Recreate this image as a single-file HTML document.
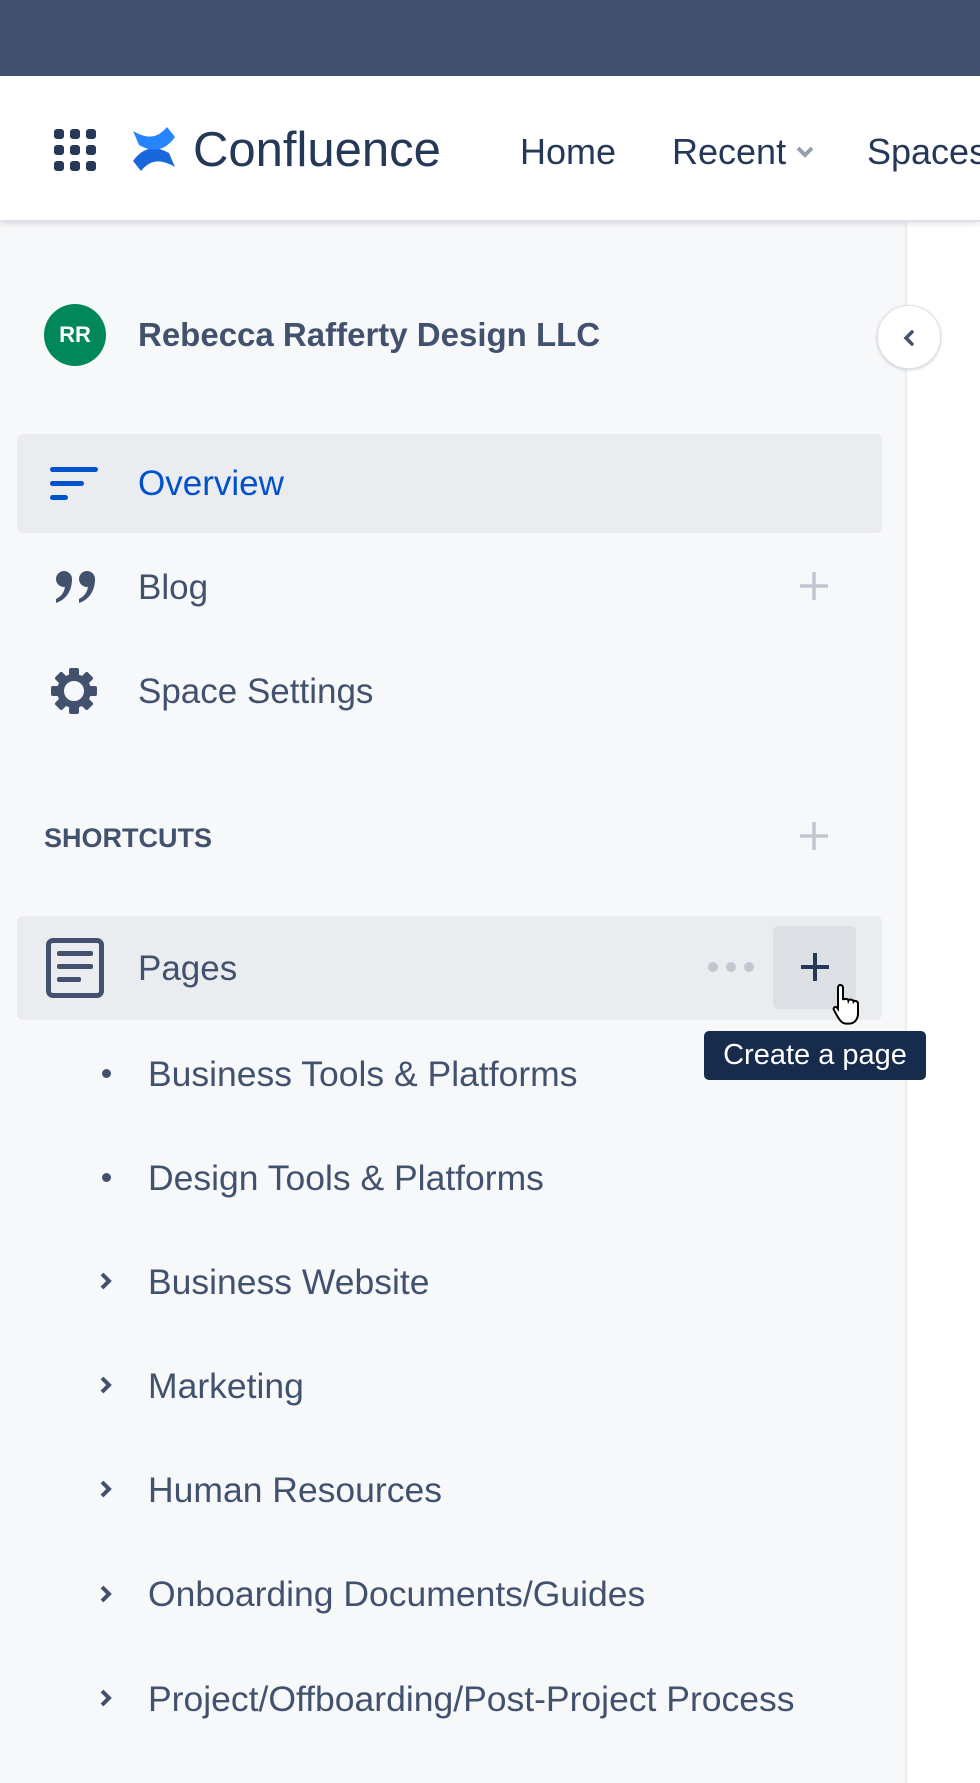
<!DOCTYPE html>
<html><head><meta charset="utf-8"><style>
*{margin:0;padding:0;box-sizing:border-box}
body{width:980px;height:1783px;overflow:hidden;background:#fff;font-family:"Liberation Sans",sans-serif;color:#42526e;position:relative}
.abs{position:absolute}
.top{left:0;top:0;width:980px;height:76px;background:#42526e}
.hdr{left:0;top:76px;width:980px;height:146px;background:#fff;border-bottom:2px solid #dfe1e6;box-shadow:0 2px 6px rgba(9,30,66,.12);z-index:2}
.side{left:0;top:222px;width:907px;height:1561px;background:#f7f8f9;border-right:2px solid #ebecf0}
.t{position:absolute;white-space:nowrap;line-height:1}
.row{position:absolute;left:17px;width:865px;background:#ebecf0;border-radius:6px}
.bul{position:absolute;left:102px;width:9px;height:9px;border-radius:50%;background:#42526e}
.it{font-size:35.5px}
</style></head><body>
<div class="abs top"></div>
<div class="abs hdr">
 <svg class="abs" style="left:54px;top:53px" width="42" height="42" viewBox="0 0 42 42" fill="#253858">
  <rect x="0" y="0" width="10" height="10" rx="3"/><rect x="16" y="0" width="10" height="10" rx="3"/><rect x="32" y="0" width="10" height="10" rx="3"/>
  <rect x="0" y="16" width="10" height="10" rx="3"/><rect x="16" y="16" width="10" height="10" rx="3"/><rect x="32" y="16" width="10" height="10" rx="3"/>
  <rect x="0" y="32" width="10" height="10" rx="3"/><rect x="16" y="32" width="10" height="10" rx="3"/><rect x="32" y="32" width="10" height="10" rx="3"/>
 </svg>
 <svg class="abs" style="left:131px;top:51px" width="46" height="44" viewBox="0 0 46 44">
  <path d="M2 34 C12 20 24 18 38 26 L44 40 C30 32 20 32 10 44 Z" fill="#1868db"/>
  <path d="M44 10 C34 24 22 26 8 18 L2 4 C16 12 26 12 36 0 Z" fill="#2684ff"/>
 </svg>
 <div class="t" style="left:193px;top:50px;font-size:49px;color:#253858">Confluence</div>
 <div class="t" style="left:520px;top:58px;font-size:36px;color:#253858">Home</div>
 <div class="t" style="left:672px;top:58px;font-size:36px;color:#253858">Recent</div>
 <svg class="abs" style="left:795px;top:69px" width="20" height="14" viewBox="0 0 20 14"><path d="M3 3l7 7 7-7" stroke="#97a0af" stroke-width="4" fill="none"/></svg>
 <div class="t" style="left:867px;top:58px;font-size:36px;color:#253858">Spaces</div>
</div>
<div class="abs side"></div>
<div class="abs" style="left:44px;top:304px;width:62px;height:62px;border-radius:50%;background:#00875a;color:#fff;font-size:22px;font-weight:bold;text-align:center;line-height:62px">RR</div>
<div class="t" style="left:138px;top:318px;font-size:33px;font-weight:bold;color:#42526e">Rebecca Rafferty Design LLC</div>
<div class="abs" style="left:877px;top:305px;width:64px;height:64px;border-radius:50%;background:#fff;border:1px solid #dfe1e6;box-shadow:0 1px 3px rgba(9,30,66,.2);z-index:3">
 <svg class="abs" style="left:22px;top:22px" width="20" height="20" viewBox="0 0 20 20"><path d="M12 4l-6 6 6 6" stroke="#42526e" stroke-width="3.5" fill="none" stroke-linecap="round"/></svg>
</div>
<div class="row" style="top:434px;height:99px"></div>
<svg class="abs" style="left:50px;top:467px" width="50" height="36" viewBox="0 0 50 36" fill="#0052cc"><rect x="0" y="0" width="48" height="5" rx="2.5"/><rect x="0" y="14" width="34" height="5" rx="2.5"/><rect x="0" y="28" width="18" height="5" rx="2.5"/></svg>
<div class="t" style="left:138px;top:466px;font-size:35px;color:#0052cc">Overview</div>
<svg class="abs" style="left:55px;top:570px" width="42" height="34" viewBox="0 0 42 34" fill="#42526e">
 <circle cx="9" cy="9" r="8"/><path d="M17 9 C17 22 10 30 1 33 L1 29 C7 26 10 21 10 15 Z"/>
 <circle cx="32" cy="9" r="8"/><path d="M40 9 C40 22 33 30 24 33 L24 29 C30 26 33 21 33 15 Z"/>
</svg>
<div class="t" style="left:138px;top:570px;font-size:35px">Blog</div>
<svg class="abs" style="left:799px;top:571px" width="30" height="30" viewBox="0 0 30 30"><path d="M15 1v28M1 15h28" stroke="#c1c7d0" stroke-width="3.5"/></svg>
<svg class="abs" style="left:51px;top:668px" width="46" height="46" viewBox="0 0 46 46" fill="#42526e">
 <g transform="translate(23 23)">
  <rect x="-5" y="-23" width="10" height="10" rx="2"/><rect x="-5" y="-23" width="10" height="10" rx="2" transform="rotate(45)"/>
  <rect x="-5" y="-23" width="10" height="10" rx="2" transform="rotate(90)"/><rect x="-5" y="-23" width="10" height="10" rx="2" transform="rotate(135)"/>
  <rect x="-5" y="-23" width="10" height="10" rx="2" transform="rotate(180)"/><rect x="-5" y="-23" width="10" height="10" rx="2" transform="rotate(225)"/>
  <rect x="-5" y="-23" width="10" height="10" rx="2" transform="rotate(270)"/><rect x="-5" y="-23" width="10" height="10" rx="2" transform="rotate(315)"/>
  <circle r="13.5" fill="none" stroke="#42526e" stroke-width="7"/>
 </g>
</svg>
<div class="t" style="left:138px;top:674px;font-size:35px">Space Settings</div>
<div class="t" style="left:44px;top:825px;font-size:27px;font-weight:bold">SHORTCUTS</div>
<svg class="abs" style="left:799px;top:821px" width="30" height="30" viewBox="0 0 30 30"><path d="M15 1v28M1 15h28" stroke="#c1c7d0" stroke-width="3.5"/></svg>
<div class="row" style="top:916px;height:104px"></div>
<div class="abs" style="left:46px;top:938px;width:58px;height:60px;border:5px solid #42526e;border-radius:7px"></div>
<div class="abs" style="left:57px;top:951px;width:36px;height:5px;background:#42526e;border-radius:2px"></div>
<div class="abs" style="left:57px;top:964px;width:36px;height:5px;background:#42526e;border-radius:2px"></div>
<div class="abs" style="left:57px;top:977px;width:24px;height:5px;background:#42526e;border-radius:2px"></div>
<div class="t" style="left:138px;top:951px;font-size:35px">Pages</div>
<div class="abs" style="left:708px;top:962px;width:10px;height:10px;border-radius:50%;background:#c1c7d0"></div>
<div class="abs" style="left:726px;top:962px;width:10px;height:10px;border-radius:50%;background:#c1c7d0"></div>
<div class="abs" style="left:744px;top:962px;width:10px;height:10px;border-radius:50%;background:#c1c7d0"></div>
<div class="abs" style="left:773px;top:926px;width:83px;height:83px;background:#dcdfe4;border-radius:6px"></div>
<svg class="abs" style="left:799px;top:951px" width="32" height="32" viewBox="0 0 32 32"><path d="M16 2v28M2 16h28" stroke="#253858" stroke-width="4"/></svg>
<svg class="abs" style="left:832px;top:982px" width="30" height="44" viewBox="0 0 15 22"><path d="M4 1.5c1 0 1.5.6 1.5 1.5v6c.3-.8 2.5-.8 2.7.3.3-.8 2.4-.7 2.6.5.4-.6 2.2-.4 2.2 1v5c0 2.5-1.5 5-4.5 5H7c-2 0-3-1.5-4.5-4L1 14c-.6-1 .5-2 1.4-1.3L3 13.5V3c0-1 .5-1.5 1-1.5z" fill="#fff" stroke="#000" stroke-width="1"/></svg>
<div class="abs" style="left:704px;top:1031px;width:222px;height:49px;background:#172b4d;border-radius:5px;color:#fff;font-size:29px;text-align:center;line-height:49px;white-space:nowrap">Create a page</div>
<div class="bul" style="top:1069px"></div>
<div class="t it" style="left:148px;top:1057px">Business Tools &amp; Platforms</div>
<div class="bul" style="top:1173px"></div>
<div class="t it" style="left:148px;top:1161px">Design Tools &amp; Platforms</div>
<svg class="abs" style="left:98px;top:1271px" width="16" height="20" viewBox="0 0 16 20"><path d="M4 3l7 7-7 7" stroke="#42526e" stroke-width="4" fill="none"/></svg>
<div class="t it" style="left:148px;top:1265px">Business Website</div>
<svg class="abs" style="left:98px;top:1375px" width="16" height="20" viewBox="0 0 16 20"><path d="M4 3l7 7-7 7" stroke="#42526e" stroke-width="4" fill="none"/></svg>
<div class="t it" style="left:148px;top:1369px">Marketing</div>
<svg class="abs" style="left:98px;top:1479px" width="16" height="20" viewBox="0 0 16 20"><path d="M4 3l7 7-7 7" stroke="#42526e" stroke-width="4" fill="none"/></svg>
<div class="t it" style="left:148px;top:1473px">Human Resources</div>
<svg class="abs" style="left:98px;top:1584px" width="16" height="20" viewBox="0 0 16 20"><path d="M4 3l7 7-7 7" stroke="#42526e" stroke-width="4" fill="none"/></svg>
<div class="t it" style="left:148px;top:1577px">Onboarding Documents/Guides</div>
<svg class="abs" style="left:98px;top:1688px" width="16" height="20" viewBox="0 0 16 20"><path d="M4 3l7 7-7 7" stroke="#42526e" stroke-width="4" fill="none"/></svg>
<div class="t it" style="left:148px;top:1682px">Project/Offboarding/Post-Project Process</div>
</body></html>
